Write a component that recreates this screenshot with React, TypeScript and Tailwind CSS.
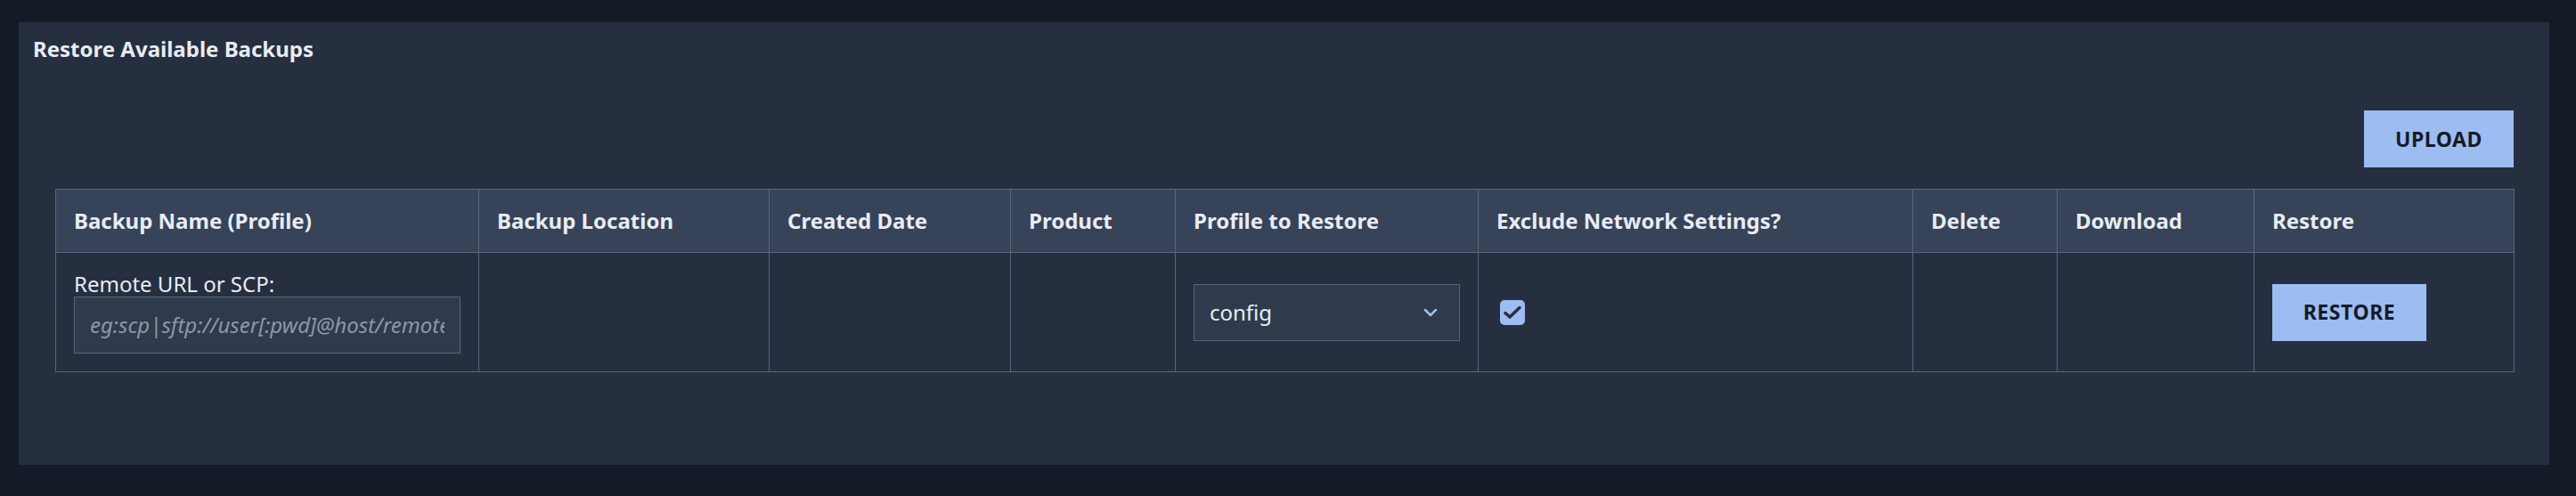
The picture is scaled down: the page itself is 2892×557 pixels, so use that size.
const columns = [
  { label: "Backup Name (Profile)", width: "w-[475px]" },
  { label: "Backup Location", width: "w-[326px]" },
  { label: "Created Date", width: "w-[271px]" },
  { label: "Product", width: "w-[185px]" },
  { label: "Profile to Restore", width: "w-[340px]" },
  { label: "Exclude Network Settings?", width: "w-[488px]" },
  { label: "Delete", width: "w-[162px]" },
  { label: "Download", width: "w-[221px]" },
  { label: "Restore", width: "w-[292px]" },
];

function ChevronDown() {
  return (
    <svg width="16" height="10" viewBox="0 0 16 10" fill="none">
      <path d="M2 2 L8 8 L14 2" stroke="#9dbcf2" strokeWidth="2.5" strokeLinecap="round" strokeLinejoin="round" />
    </svg>
  );
}

function CheckMark() {
  return (
    <svg width="22" height="18" viewBox="0 0 22 18" fill="none">
      <path d="M3 9.5 L8 14 L19 3.5" stroke="#262f40" strokeWidth="3.5" strokeLinecap="round" strokeLinejoin="round" />
    </svg>
  );
}

export default function App() {
  return (
    <div
      className="h-[557px] w-full bg-[#151b26] pb-[35px] pl-[21px] pr-[30px] pt-[25px] text-[#e8ecf3]"
      style={{ fontFamily: '"Noto Sans", "Open Sans", sans-serif' }}
    >
      <div className="h-full w-full bg-[#262f40]">
        {/* Panel title */}
        <div className="px-4 pt-3 text-[24px] font-bold leading-[36px]">Restore Available Backups</div>

        <div className="pl-[41px] pr-[40px]">
          {/* Upload action */}
          <div className="mt-[51px] flex justify-end">
            <button className="h-[64px] w-[168px] bg-[#9dbcf2] text-[23px] font-bold tracking-wide text-[#151b26]">
              UPLOAD
            </button>
          </div>

          {/* Backups table */}
          <table className="mt-[24px] w-[2760px] table-fixed border-collapse border border-[#5a6579]">
            <colgroup>
              {columns.map((c) => (
                <col key={c.label} className={c.width} />
              ))}
            </colgroup>
            <thead>
              <tr className="h-[71px] bg-[#364359]">
                {columns.map((c) => (
                  <th
                    key={c.label}
                    className="border border-[#5a6579] px-[20px] text-left align-middle text-[24px] font-bold"
                  >
                    {c.label}
                  </th>
                ))}
              </tr>
            </thead>
            <tbody>
              <tr className="h-[134px]">
                <td className="border border-[#5a6579] px-[20px] align-middle">
                  <div className="text-[24px] leading-[28px]">Remote URL or SCP:</div>
                  <input
                    type="text"
                    placeholder="eg:scp|sftp://user[:pwd]@host/remotefile"
                    className="h-[64px] w-full border border-[#5a6579] bg-[#2f3a4c] px-[17px] text-[24px] italic text-[#e8ecf3] outline-none placeholder:text-[#8d97a8]"
                  />
                </td>
                <td className="border border-[#5a6579]" />
                <td className="border border-[#5a6579]" />
                <td className="border border-[#5a6579]" />
                <td className="border border-[#5a6579] px-[20px] align-middle">
                  <div className="flex h-[64px] w-full items-center justify-between border border-[#5a6579] bg-[#2f3a4c] pl-[17px] pr-[24px] text-[24px]">
                    <span>config</span>
                    <ChevronDown />
                  </div>
                </td>
                <td className="border border-[#5a6579] px-[20px] align-middle">
                  <div className="ml-[4px] flex h-[28px] w-[28px] items-center justify-center rounded-[5px] bg-[#9dbcf2]">
                    <CheckMark />
                  </div>
                </td>
                <td className="border border-[#5a6579]" />
                <td className="border border-[#5a6579]" />
                <td className="border border-[#5a6579] px-[20px] align-middle">
                  <button className="h-[64px] w-[173px] bg-[#9dbcf2] text-[23px] font-bold tracking-wide text-[#151b26]">
                    RESTORE
                  </button>
                </td>
              </tr>
            </tbody>
          </table>
        </div>
      </div>
    </div>
  );
}
